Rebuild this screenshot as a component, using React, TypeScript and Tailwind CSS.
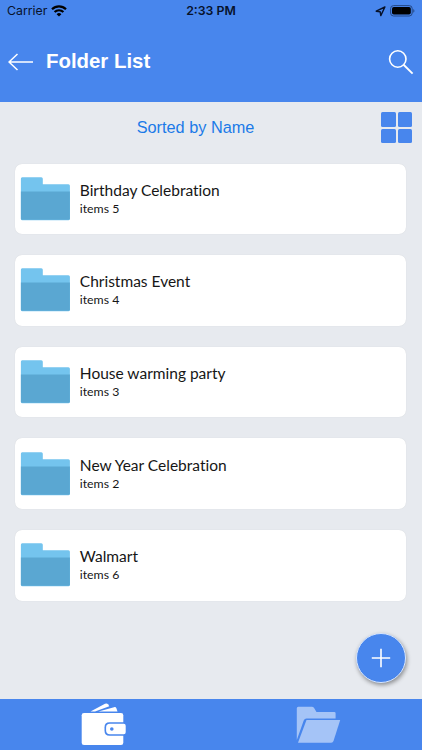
const folders = [
  { name: 'Birthday Celebration', items: 5 },
  { name: 'Christmas Event', items: 4 },
  { name: 'House warming party', items: 3 },
  { name: 'New Year Celebration', items: 2 },
  { name: 'Walmart', items: 6 },
];

function StatusBar() {
  return (
    <div className="grid grid-cols-3 items-center h-[22px] px-[7px] text-[#07122b] font-['Inter',sans-serif]">
      <div className="flex items-center gap-1">
        <span className="text-[12.3px] leading-none">Carrier</span>
        <svg width="16" height="12" viewBox="0 0 16 12" fill="none" stroke="#000" strokeWidth="2.2">
          <path d="M1 4.3a10 10 0 0 1 14 0" />
          <path d="M3.6 7.1a6.2 6.2 0 0 1 8.8 0" />
          <path d="M8 11.6 5.6 9.2a3.4 3.4 0 0 1 4.8 0z" fill="#000" stroke="none" />
        </svg>
      </div>
      <span className="text-center text-[12.3px] leading-none font-semibold">2:33 PM</span>
      <div className="flex items-center justify-end gap-1">
        <svg width="11" height="11" viewBox="0 0 11 11" fill="none" stroke="#07122b" strokeWidth="1.4" strokeLinejoin="round">
          <path d="M9.9 1 1.2 5.2l4 .6.6 3.8z" />
        </svg>
        <svg width="25" height="12" viewBox="0 0 25 12">
          <rect x="0.6" y="0.6" width="21.6" height="10.4" rx="3" fill="none" stroke="#234785" strokeWidth="1" />
          <rect x="2" y="2" width="18.8" height="7.6" rx="1.8" fill="#000" />
          <path d="M23.3 4v3.8c1.5-.5 1.5-3.3 0-3.8z" fill="#234785" />
        </svg>
      </div>
    </div>
  );
}

function Header() {
  return (
    <header className="h-[102px] shrink-0 bg-[#4886ed]">
      <StatusBar />
      <div className="flex items-center h-[79px] pl-2 pr-[8px] text-white">
        <svg width="26" height="18" viewBox="0 0 26 18" fill="none" stroke="currentColor" strokeWidth="1.5">
          <path d="M25 9H1M9.5 1 1 9l8.5 8" />
        </svg>
        <h1 className="ml-3 flex-1 text-[20.4px] font-bold leading-none font-['Liberation_Sans',sans-serif]">Folder List</h1>
        <svg width="26" height="26" viewBox="0 0 26 26" fill="none" stroke="currentColor" strokeWidth="1.6">
          <circle cx="9.8" cy="10" r="8.2" />
          <path d="m15.6 15.8 9 8.8" strokeWidth="1.9" />
        </svg>
      </div>
    </header>
  );
}

function FolderIcon() {
  return (
    <svg width="50" height="44" viewBox="-0.6 0 50 44">
      <path d="M1.5.3h19.2q1.5 0 1.5 1.5v5.4h25.6q1.5 0 1.5 1.5v33q0 1.5-1.5 1.5h-46Q.3 43.2.3 41.7V1.8Q.3.3 1.5.3z" fill="#74c4ee" />
      <path d="M.3 14.6h49v26.6q0 1.5-1.5 1.5h-46Q.3 42.7.3 41.2z" fill="#5aa7d2" />
    </svg>
  );
}

function FolderCard({ name, items }: { name: string; items: number }) {
  return (
    <li className="flex items-center h-[70.6px] pl-[5px] rounded-[7px] bg-white shadow-[0_0_1px_rgba(0,0,0,0.12)] font-['Lato',sans-serif] text-[#161616]">
      <FolderIcon />
      <div className="ml-[9.4px] [font-variant-ligatures:none]">
        <div className="text-[15.5px] leading-[20px]">{name}</div>
        <div className="text-[12.3px] leading-[18px]">items {items}</div>
      </div>
    </li>
  );
}

export default function App() {
  return (
    <div className="relative flex flex-col w-[422px] h-[750px] overflow-hidden bg-[#e7eaef]">
      <Header />
      <div className="grid grid-cols-[1fr_auto_1fr] items-center h-[51px] pl-[5px] pr-[10px]">
        <span className="col-start-2 text-[16.3px] leading-none text-[#1b7ae8] font-['Liberation_Sans',sans-serif] -translate-x-[13px]">
          Sorted by Name
        </span>
        <div className="grid grid-cols-2 gap-[2px] justify-self-end">
          {[0, 1, 2, 3].map((n) => (
            <span key={n} className="w-[14.5px] h-[14.5px] rounded-[1.5px] bg-[#4886ed]" />
          ))}
        </div>
      </div>
      <ul className="flex flex-col flex-1 gap-[21px] pt-[10.6px] pl-[15.4px] pr-[15.6px]">
        {folders.map((folder) => (
          <FolderCard key={folder.name} {...folder} />
        ))}
      </ul>

      <button className="absolute left-[356px] top-[633px] flex items-center justify-center w-[50px] h-[50px] rounded-full bg-[#4886ed] border border-[#d7e6ff] shadow-[1px_2px_4px_rgba(0,0,0,0.4)]">
        <svg width="20" height="20" viewBox="0 0 20 20" stroke="#fff" strokeWidth="1.6">
          <path d="M10 .8v18.4M.8 10h18.4" />
        </svg>
      </button>

      <nav className="flex items-start h-[51px] shrink-0 bg-[#4886ed]">
        <div className="flex flex-1 justify-center pt-1 pr-[6px]">
          <svg width="45" height="43" viewBox="0 0 45 43">
            <path d="M9.5 8.5 24 .8q2-1 3 .5l1.3 2L14 8.5z" fill="#fff" />
            <path d="M17.5 8.5 33 4.2q1.8-.5 2.4 1l1.1 3.3z" fill="#fff" />
            <path d="M3 10h37q2.3 0 2.3 2.3v27.4Q42.3 42 40 42H3Q.7 42 .7 39.7V12.3Q.7 10 3 10z" fill="#fff" />
            <path d="M46 19.3H28.5q-5 0-5 5v3.4q0 5 5 5H46z" fill="#4886ed" />
            <path d="M42.8 20.8H29q-3.9 0-3.9 3.6v3.2q0 3.6 3.9 3.6h13.8q1.9 0 1.9-1.9v-6.600q0-1.900-1.900-1.900z" fill="#fff" />
            <circle cx="30.8" cy="26" r="1.8" fill="#4886ed" />
          </svg>
        </div>
        <div className="flex flex-1 justify-center pt-[7px] pl-[2px]">
          <svg width="45" height="38" viewBox="0 0 45 38" fill="#a5c4f7">
            <path d="M.8 34V2.3Q.8.8 2.3.8h13.5q1.5 0 2.3 1.3L20.5 6h17.8q1.3 0 1.3 1.3v5.2H10.5q-2 0-2.8 2z" />
            <path d="M10.5 14H44.2L37.5 35q-.6 1.700-2.300 1.700H2z" />
          </svg>
        </div>
      </nav>
    </div>
  );
}
